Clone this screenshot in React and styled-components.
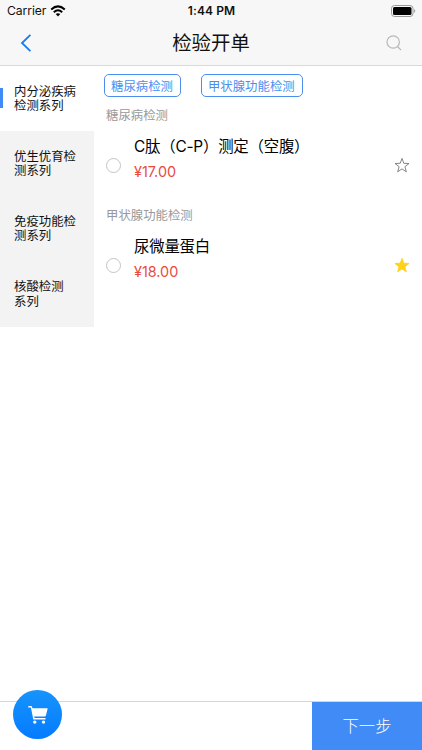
import React from 'react';

import styled, { createGlobalStyle } from 'styled-components';

const GlobalStyle = createGlobalStyle`
    html, body {
        margin: 0;
        background: #fff;
    }

    * {
        box-sizing: border-box;
    }
`

const Screen = styled.div`
    display: flex;
    flex-direction: column;
    width: 422px;
    height: 750px;
    overflow: hidden;
    background: #fff;
    color: #111;
    font-family: Inter, "Noto Sans CJK SC", sans-serif;
`

const Header = styled.header`
    flex: none;
    height: 66px;
    background: #f7f7f7;
    border-bottom: 1px solid #d9d9d9;
`

const StatusBar = styled.div`
    display: grid;
    grid-template-columns: 1fr auto 1fr;
    align-items: center;
    height: 22px;
    padding: 0 6px 0 7px;
    font-size: 12.2px;
    line-height: 22px;
`

const Carrier = styled.div`
    display: flex;
    align-items: center;
    gap: 4px;
    letter-spacing: -0.1px;
`

const Clock = styled.div`
    font-size: 12px;
    font-weight: 600;
    letter-spacing: 0.1px;
`

const Battery = styled.svg`
    justify-self: end;
`

const NavBar = styled.div`
    display: grid;
    grid-template-columns: 1fr auto 1fr;
    align-items: center;
    height: 42px;
    padding: 0 20px;
`

const Title = styled.h1`
    margin: 0;
    font-size: 19.4px;
    font-weight: 400;
    line-height: 42px;
`

const SearchIcon = styled.svg`
    justify-self: end;
`

const Main = styled.main`
    display: flex;
    flex: 1;
    align-items: flex-start;
`

const Sidebar = styled.nav`
    flex: none;
    width: 94px;
`

const Category = styled.div`
    display: flex;
    align-items: center;
    height: 65.2px;
    padding-top: 1px;
    padding-left: ${({ $active }) => ($active ? 0 : 14)}px;
    background: ${({ $active }) => ($active ? '#fff' : '#f3f3f3')};
    font-size: 12.4px;
    line-height: 14.4px;
    white-space: pre-line;
`

const Marker = styled.span`
    width: 3px;
    height: 20px;
    margin-right: 11px;
    margin-bottom: 2px;
    background: #418bf6;
`

const Content = styled.section`
    flex: 1;
    padding: 8px 12px 0 10px;
`

const Tags = styled.div`
    display: flex;
    gap: 20px;
`

const Tag = styled.span`
    height: 23px;
    padding: 1px 7px 0 6px;
    border: 1px solid #4a8ff0;
    border-radius: 5px;
    color: #4a8ff0;
    font-size: 12.4px;
    line-height: 21px;
    white-space: nowrap;
`

const Group = styled.div`
    height: 100px;
    padding-left: 2px;
`

const GroupName = styled.div`
    height: 36px;
    color: #999;
    font-size: 12.4px;
    line-height: 38px;
`

const Item = styled.div`
    display: flex;
    align-items: center;
    height: 64px;
`

const Radio = styled.span`
    flex: none;
    width: 15px;
    height: 15px;
    margin-right: 13px;
    border: 1px solid #c4c4c4;
    border-radius: 50%;
`

const ItemText = styled.div`
    flex: 1;
    height: 64px;
`

const ItemName = styled.div`
    height: 26px;
    color: #000;
    font-size: 15.4px;
    line-height: 28px;
    letter-spacing: -0.2px;
    white-space: nowrap;
`

const Price = styled.div`
    color: #e94b42;
    font-size: 14.4px;
    line-height: 26px;
`

const Footer = styled.footer`
    display: flex;
    flex: none;
    justify-content: space-between;
    height: 49px;
    border-top: 1px solid #d6d6d6;
`

const CartButton = styled.button`
    display: flex;
    align-items: center;
    justify-content: center;
    width: 49px;
    height: 49px;
    margin: -12px 0 0 13px;
    padding: 0 0 0 1px;
    border: 0;
    border-radius: 50%;
    background: linear-gradient(#1794fc, #047bff);
`

const NextButton = styled.button`
    width: 110px;
    padding: 1px 0 0;
    border: 0;
    background: #418bf6;
    color: #fff;
    font-family: inherit;
    font-size: 16.4px;
    font-weight: 300;
    line-height: 47px;
`

const categories = [
    '内分泌疾病\n检测系列',
    '优生优育检\n测系列',
    '免疫功能检\n测系列',
    '核酸检测\n系列',
];

const groups = [
    { name: '糖尿病检测', item: 'C肽（C-P）测定（空腹）', price: '¥17.00', starred: false },
    { name: '甲状腺功能检测', item: '尿微量蛋白', price: '¥18.00', starred: true },
];

const Star = ({ filled }) => (
    <svg width="16" height="16" viewBox="0 0 16 16">
        <path
            d="M8 1.4 9.8 6.3 15 6.5 10.9 9.7 12.3 14.8 8 11.9 3.7 14.8 5.1 9.7 1 6.5 6.2 6.3Z"
            fill={filled ? '#ffd21a' : 'none'}
            stroke={filled ? '#ffd21a' : '#777'}
            strokeWidth="0.9"
        />
    </svg>
);

const App = () => (
    <Screen>
        <GlobalStyle/>
        <Header>
            <StatusBar>
                <Carrier>
                    Carrier
                    <svg width="16" height="12" viewBox="0 0 16 12">
                        <g fill="none" stroke="#000" strokeWidth="2">
                            <path d="M1.2 4.5Q8-1.7 14.8 4.5"/>
                            <path d="M3.8 7.2Q8 3.4 12.2 7.2"/>
                        </g>
                        <path d="M5.7 9.1Q8 7.2 10.3 9.1L8 11.4Z"/>
                    </svg>
                </Carrier>
                <Clock>1:44 PM</Clock>
                <Battery width="25" height="12" viewBox="0 0 25 12">
                    <rect x="0.5" y="0.5" width="21.5" height="11" rx="3" fill="none" stroke="#999"/>
                    <rect x="2" y="2" width="18.5" height="8" rx="1.5"/>
                    <path d="M23.2 4Q25.4 6 23.2 8Z" fill="#999"/>
                </Battery>
            </StatusBar>
            <NavBar>
                <svg width="12" height="20" viewBox="0 0 12 20">
                    <path d="M10.4 1.8 2 10l8.4 8.2" fill="none" stroke="#187cee" strokeWidth="1.8"/>
                </svg>
                <Title>检验开单</Title>
                <SearchIcon width="16" height="16" viewBox="0 0 16 16">
                    <g fill="none" stroke="#b8b8b8" strokeWidth="1.2">
                        <circle cx="7.2" cy="7" r="6.2"/>
                        <path d="m11.5 11.5 3.6 3.7"/>
                    </g>
                </SearchIcon>
            </NavBar>
        </Header>
        <Main>
            <Sidebar>
                {categories.map((name, i) => (
                    <Category key={name} $active={i === 0}>
                        {i === 0 && <Marker/>}
                        <span>{name}</span>
                    </Category>
                ))}
            </Sidebar>
            <Content>
                <Tags>
                    {groups.map(({ name }) => <Tag key={name}>{name}</Tag>)}
                </Tags>
                {groups.map(({ name, item, price, starred }) => (
                    <Group key={name}>
                        <GroupName>{name}</GroupName>
                        <Item>
                            <Radio/>
                            <ItemText>
                                <ItemName>{item}</ItemName>
                                <Price>{price}</Price>
                            </ItemText>
                            <Star filled={starred}/>
                        </Item>
                    </Group>
                ))}
            </Content>
        </Main>
        <Footer>
            <CartButton>
                <svg width="22" height="20" viewBox="0 0 22 20" fill="#fff">
                    <path d="M1.3 1h3.2l1.1 2.2H20q.8 0 .6.9l-1.7 6.4q-.3.9-1.2.9H7.2l.3 1.7h11v1.4H6.3L4 3.1 3.6 2.4H1.3Z"/>
                    <circle cx="7.8" cy="17.1" r="1.7"/>
                    <circle cx="16.5" cy="17.1" r="1.7"/>
                </svg>
            </CartButton>
            <NextButton>下一步</NextButton>
        </Footer>
    </Screen>
);

export default App;
